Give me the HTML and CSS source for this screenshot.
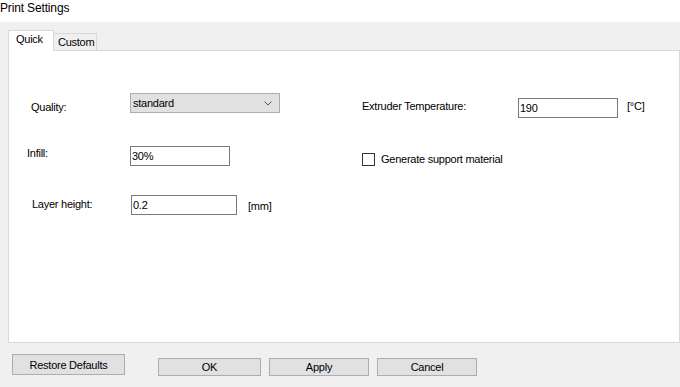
FILE: index.html
```
<!DOCTYPE html>
<html lang="en">
<head>
    <meta charset="UTF-8">
    <title>Print Settings</title>
    <link rel="stylesheet" href="styles.css">
</head>
<body>
    <div class="titlebar">Print Settings</div>

    <div class="tabs">
        <div class="tab tab-active">Quick</div>
        <div class="tab">Custom</div>
    </div>

    <div class="panel">
        <div class="col-left">
            <div class="row row-quality">
                <span class="label label-quality">Quality:</span>
                <div class="combo">
                    <span>standard</span>
                    <svg class="chevron" width="8" height="5" viewBox="0 0 8 5">
                        <polyline points="0.5,0.5 4,4 7.5,0.5" fill="none" stroke="#555" stroke-width="1"/>
                    </svg>
                </div>
            </div>
            <div class="row row-infill">
                <span class="label label-infill">Infill:</span>
                <input class="field field-infill" type="text" value="30%">
            </div>
            <div class="row row-layer">
                <span class="label label-layer">Layer height:</span>
                <input class="field field-layer" type="text" value="0.2">
                <span class="unit unit-mm">[mm]</span>
            </div>
        </div>

        <div class="col-right">
            <div class="row row-temp">
                <span class="label label-temp">Extruder Temperature:</span>
                <input class="field" type="text" value="190">
                <span class="unit unit-temp">[°C]</span>
            </div>
            <div class="row row-support">
                <span class="checkbox"></span>
                <span class="label label-support">Generate support material</span>
            </div>
        </div>
    </div>

    <div class="footer">
        <button class="btn btn-restore">Restore Defaults</button>
        <div class="btn-group">
            <button class="btn">OK</button>
            <button class="btn">Apply</button>
            <button class="btn">Cancel</button>
        </div>
    </div>
</body>
</html>
```

FILE: styles.css
```
body {
    margin: 0;
    background-color: #f0f0f0;
    font-family: "Liberation Sans", Arial, sans-serif;
    font-size: 11px;
    line-height: 13px;
    letter-spacing: -0.25px; /* Systemschrift ist etwas schmaler */
    color: #000;
    height: 387px;
    overflow: hidden;
}

.titlebar {
    height: 21px;
    padding-top: 1px;
    background-color: #fff;
    font-size: 12px;
    line-height: 15px;
    letter-spacing: -0.15px;
}

/* Reiter */
.tabs {
    display: flex;
    align-items: flex-end;
    padding-left: 8px;
    margin-top: 8px;
    height: 20px;
}
.tab {
    box-sizing: border-box;
    height: 17px;
    width: 44px;
    margin-left: -1px;
    padding: 2px 0 0 4px;
    border: 1px solid #d9d9d9;
    border-bottom: none;
    background-color: #f0f0f0;
}
.tab-active {
    position: relative;
    z-index: 1;
    height: 21px;
    width: 46px;
    margin-left: 0;
    margin-bottom: -1px;
    padding: 2px 0 0 7px;
    background-color: #fff;
}

/* Inhalt */
.panel {
    box-sizing: border-box;
    display: flex;
    width: 672px;
    height: 293px;
    margin-left: 8px;
    border: 1px solid #d9d9d9;
    background-color: #fff;
}
.col-left {
    width: 353px;
    padding-top: 42px;
}
.col-right {
    padding-top: 47px;
}
.row {
    display: flex;
    align-items: flex-start;
}
.row-infill {
    margin-top: 32px;
}
.row-layer {
    margin-top: 29px;
}
.row-support {
    margin-top: 35px;
}

.label-quality {
    margin: 8px 0 0 22px;
    width: 99px;
}
.label-infill {
    margin: 1px 0 0 18px;
    width: 103px;
}
.label-layer {
    margin: 3px 0 0 23px;
    width: 99px;
}
.label-temp {
    margin-top: 2px;
    width: 156px;
}
.label-support {
    margin-left: 6px;
}

.combo {
    box-sizing: border-box;
    display: flex;
    align-items: center;
    justify-content: space-between;
    width: 150px;
    height: 20px;
    padding: 0 7px 0 2px;
    border: 1px solid #adadad;
    background-color: #e1e1e1;
}
.chevron {
    display: block;
}

.field {
    box-sizing: border-box;
    width: 100px;
    height: 20px;
    margin: 0;
    padding: 0 1px;
    border: 1px solid #7a7a7a;
    font-family: inherit;
    font-size: 11px;
    letter-spacing: inherit;
    color: #000;
    outline: none;
}
.field-layer {
    width: 106px;
}

.unit-mm {
    margin: 5px 0 0 11px;
}
.unit-temp {
    margin: 2px 0 0 9px;
}

.checkbox {
    box-sizing: border-box;
    width: 13px;
    height: 13px;
    border: 1px solid #333;
    background-color: #fff;
}

/* Schaltflächen unten */
.footer {
    display: flex;
    align-items: flex-start;
}
.btn {
    box-sizing: border-box;
    width: 100px;
    height: 18px;
    margin: 0;
    padding: 0;
    border: 1px solid #adadad;
    background-color: #e1e1e1;
    font-family: inherit;
    font-size: 11px;
    letter-spacing: inherit;
    color: #000;
}
.btn-restore {
    width: 113px;
    height: 21px;
    margin: 11px 0 0 12px;
}
.btn-group {
    display: flex;
    gap: 8px;
    margin: 15px 0 0 33px;
}
.btn-group .btn:first-child {
    width: 103px;
}
```
